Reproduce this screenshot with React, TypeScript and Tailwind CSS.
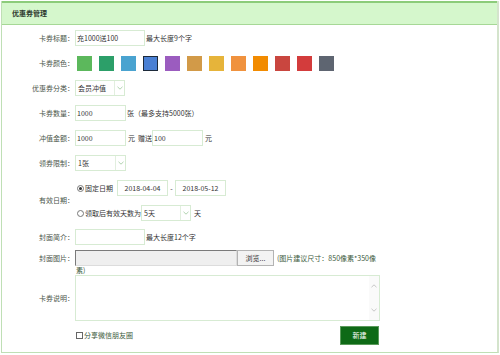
import React from "react";

const swatches = [
  "#5cb85c",
  "#2c9f69",
  "#4aa3d0",
  "#4a80d4",
  "#9b5cbf",
  "#d29a48",
  "#e6b43a",
  "#f0923e",
  "#f28b00",
  "#c9463f",
  "#d33c3c",
  "#5e6571",
];

function Label({ children }: { children: React.ReactNode }) {
  return <div className="w-[73px] shrink-0 pr-[1px] text-right text-[#4a554a]">{children}</div>;
}

function Field({ w, value, center }: { w: string; value?: string; center?: boolean }) {
  return (
    <div
      className={`${w} flex h-4 items-center border border-[#d7ebd3] bg-white px-[1px] text-[#333] ${center ? "justify-center" : ""}`}
    >
      {value}
    </div>
  );
}

function Select({ w, value }: { w: string; value: string }) {
  return (
    <div className={`${w} flex h-4 items-center border border-[#d7ebd3] bg-white text-[#333]`}>
      <span className="flex-1 pl-[2px]">{value}</span>
      <span className="flex h-full w-[10px] items-center justify-center border-l border-[#e2efdf]">
        <svg width="6" height="4" viewBox="0 0 6 4">
          <path d="M0.5 0.8 L3 3.2 L5.5 0.8" fill="none" stroke="#9cc79a" strokeWidth="0.8" />
        </svg>
      </span>
    </div>
  );
}

function Radio({ on }: { on?: boolean }) {
  return (
    <span className="mr-[1px] flex h-[7px] w-[7px] items-center justify-center rounded-full border border-[#777] bg-white">
      {on && <span className="h-[3px] w-[3px] rounded-full bg-[#333]" />}
    </span>
  );
}

export default function App() {
  return (
    <div
      className="h-[355px] w-[500px] bg-white p-[1px] text-[7px] leading-none"
      style={{ fontFamily: '"Noto Sans CJK SC", "Liberation Sans", sans-serif' }}
    >
      <div className="h-[352px] w-[498px] border border-t-0 border-[#bfdfb5] border-r-[#d4e4cc] border-r-2">
        <div className="flex h-[24px] items-center border-t-2 border-b border-t-[#8ccc7a] border-b-[#a6d896] bg-[#d5f7cc] pl-[10px] font-bold text-[#2f3a2f]">
          优惠券管理
        </div>

        <div className="flex flex-col pt-[5px]">
          <div className="flex h-4 items-center">
            <Label>卡券标题：</Label>
            <Field w="w-[70px]" value="充1000送100" />
            <span className="ml-[1px] text-[#333]">最大长度9个字</span>
          </div>

          <div className="mt-[9px] flex h-4 items-center">
            <Label>卡券颜色：</Label>
            <div className="flex gap-[7px] pl-[2px]">
              {swatches.map((c, i) => (
                <span
                  key={c}
                  className={`h-[15px] w-[15px] ${i === 3 ? "border border-[#1d2a3a]" : ""}`}
                  style={{ backgroundColor: c }}
                />
              ))}
            </div>
          </div>

          <div className="mt-[9px] flex h-4 items-center">
            <Label>优惠券分类：</Label>
            <Select w="w-[50px]" value="会员冲值" />
          </div>

          <div className="mt-[9px] flex h-4 items-center">
            <Label>卡券数量：</Label>
            <Field w="w-[51px]" value="1000" />
            <span className="ml-[1px] text-[#333]">张（最多支持5000张）</span>
          </div>

          <div className="mt-[9px] flex h-4 items-center">
            <Label>冲值金额：</Label>
            <Field w="w-[51px]" value="1000" />
            <span className="ml-[2px] text-[#333]">元</span>
            <span className="ml-[3px] text-[#333]">赠送</span>
            <Field w="w-[51px]" value="100" />
            <span className="ml-[2px] text-[#333]">元</span>
          </div>

          <div className="mt-[9px] flex h-4 items-center">
            <Label>领券限制：</Label>
            <Select w="w-[51px]" value="1张" />
          </div>

          <div className="mt-[9px] flex items-center">
            <Label>有效日期：</Label>
            <div className="flex flex-col gap-[9px] pl-[2px]">
              <div className="flex h-4 items-center">
                <Radio on />
                <span className="w-[32px] text-[#333]">固定日期</span>
                <Field w="w-[51px]" value="2018-04-04" center />
                <span className="w-[7px] text-center text-[#333]">-</span>
                <Field w="w-[51px]" value="2018-05-12" center />
              </div>
              <div className="flex h-4 items-center">
                <Radio />
                <span className="text-[#333]">领取后有效天数为</span>
                <Select w="w-[50px]" value="5天" />
                <span className="ml-[3px] text-[#333]">天</span>
              </div>
            </div>
          </div>

          <div className="mt-[8px] flex h-4 items-center">
            <Label>封面简介：</Label>
            <Field w="w-[70px]" />
            <span className="ml-[1px] text-[#333]">最大长度12个字</span>
          </div>

          <div className="mt-[5px] flex">
            <div className="flex h-4 items-center">
              <Label>封面图片：</Label>
            </div>
            <div className="flex flex-col">
              <div className="flex h-4 items-center">
                <div className="h-4 w-[162px] border border-t-[#7a7a7a] border-l-[#7a7a7a] border-b-[#dcdcdc] border-r-[#dcdcdc] bg-[#efefef]" />
                <div className="flex h-4 w-[37px] items-center justify-center border border-[#b3b3b3] bg-[#f3f3f3] text-[#333]">
                  浏览...
                </div>
                <span className="ml-[3px] text-[#3b5a3b]">(图片建议尺寸：850像素*350像</span>
              </div>
              <div className="mt-[1px] h-[8px] pl-[1px] text-[#3b5a3b]">素)</div>
            </div>
          </div>

          <div className="flex items-center">
            <Label>卡券说明：</Label>
            <div className="flex h-[46px] w-[305px] border border-[#d7ebd3] bg-white">
              <div className="flex-1" />
              <div className="flex w-[10px] flex-col items-center justify-between bg-[#fafafa] py-[8px]">
                <svg width="6" height="4" viewBox="0 0 6 4">
                  <path d="M0.5 3.2 L3 0.8 L5.5 3.2" fill="none" stroke="#b9b9b9" strokeWidth="0.8" />
                </svg>
                <svg width="6" height="4" viewBox="0 0 6 4">
                  <path d="M0.5 0.8 L3 3.2 L5.5 0.8" fill="none" stroke="#b9b9b9" strokeWidth="0.8" />
                </svg>
              </div>
            </div>
          </div>

          <div className="mt-[5px] flex h-[19px] items-center">
            <div className="w-[74px] shrink-0" />
            <div className="flex w-[303px] items-center justify-between">
              <div className="flex items-center text-[#3b5a3b]">
                <span className="mr-[1px] h-[7px] w-[7px] border border-[#666] bg-white" />
                分享微信朋友圈
              </div>
              <div className="flex h-[19px] w-[39px] items-center justify-center border border-[#5a9a5a] bg-[#0e6a16] text-white">
                新建
              </div>
            </div>
          </div>
        </div>
      </div>
    </div>
  );
}
